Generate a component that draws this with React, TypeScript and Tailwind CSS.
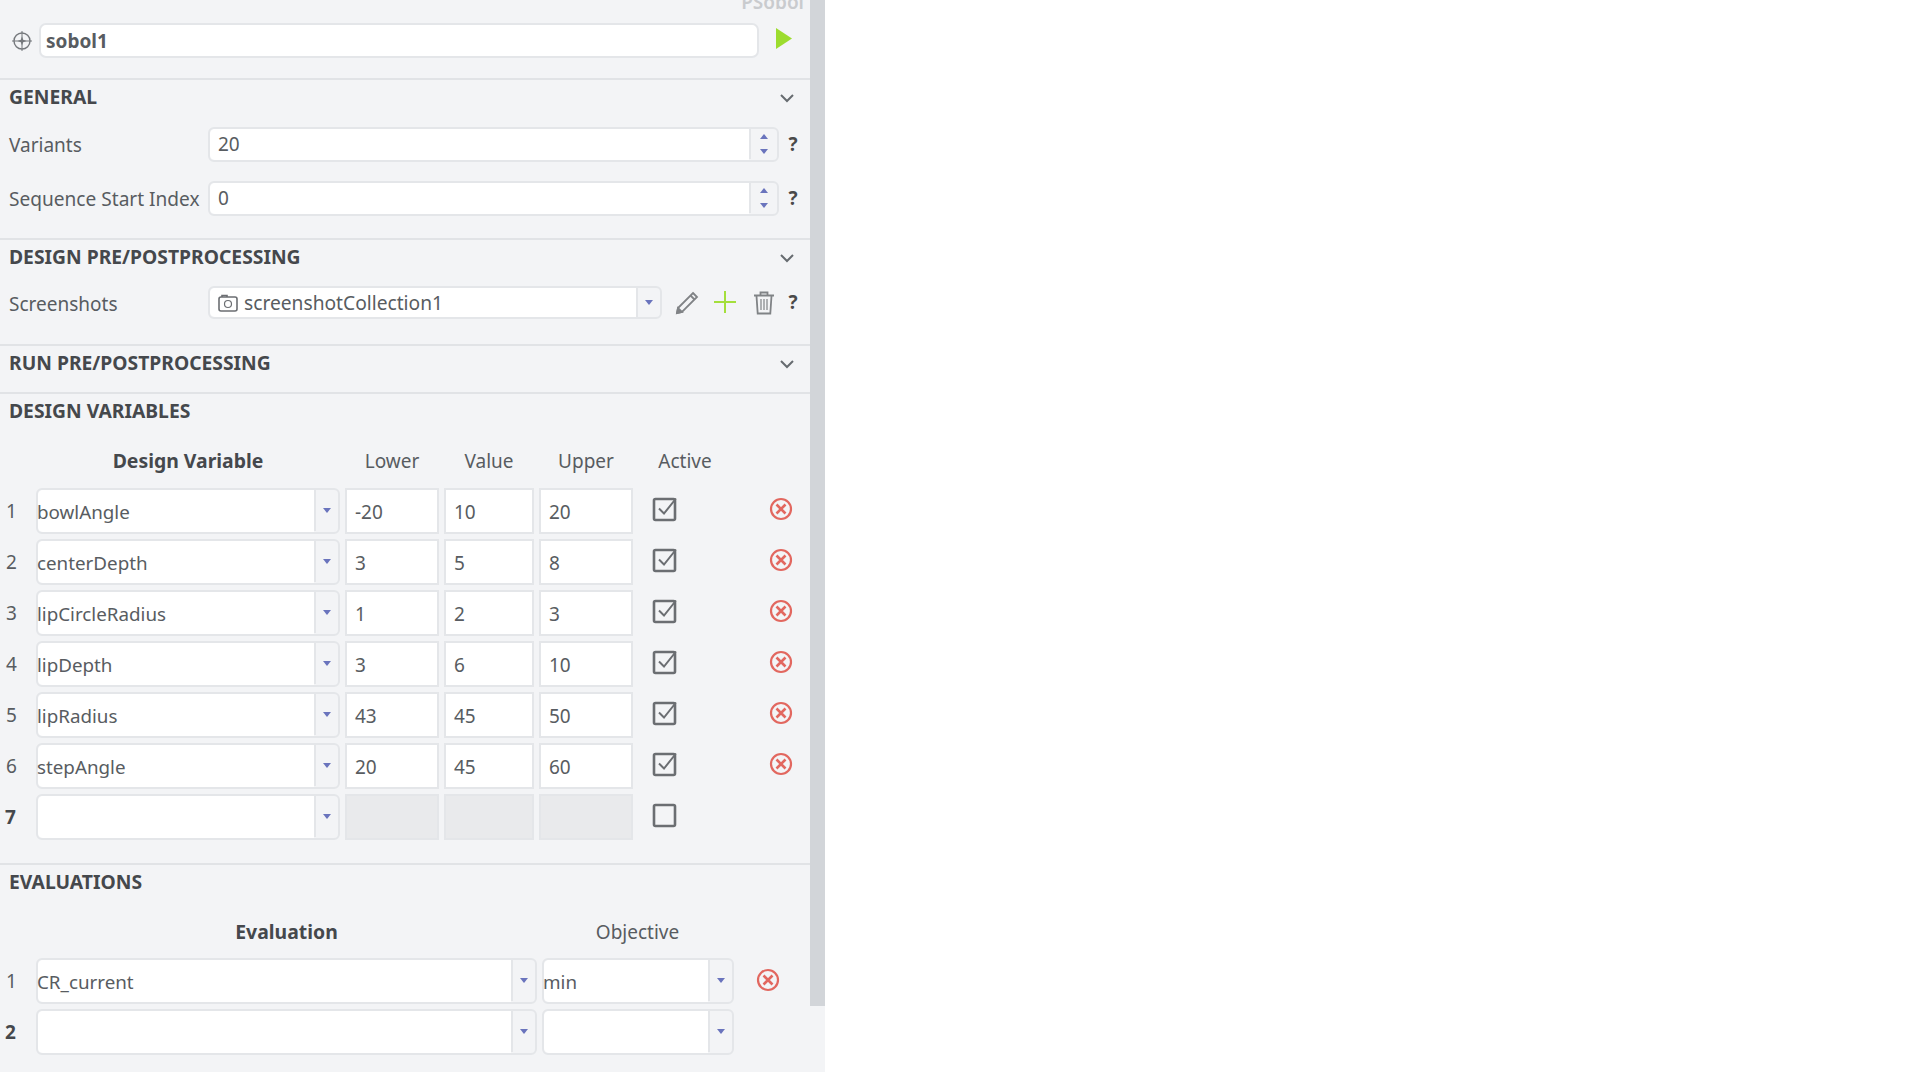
const DV = [
  { name: "bowlAngle", lower: "-20", value: "10", upper: "20" },
  { name: "centerDepth", lower: "3", value: "5", upper: "8" },
  { name: "lipCircleRadius", lower: "1", value: "2", upper: "3" },
  { name: "lipDepth", lower: "3", value: "6", upper: "10" },
  { name: "lipRadius", lower: "43", value: "45", upper: "50" },
  { name: "stepAngle", lower: "20", value: "45", upper: "60" },
];

function Caret() {
  return (
    <svg width="8" height="5" viewBox="0 0 8 5">
      <path d="M0 0h8L4 5z" fill="#6a74bd" />
    </svg>
  );
}

function Chevron() {
  return (
    <svg width="14" height="9" viewBox="0 0 14 9" fill="none" stroke="#666b70" strokeWidth="2">
      <path d="M1 1l6 6 6-6" />
    </svg>
  );
}

function Remove() {
  return (
    <svg width="24" height="24" viewBox="0 0 24 24" fill="none" stroke="#e2675f" strokeWidth="2.2">
      <circle cx="12" cy="12" r="10" />
      <path d="M7.5 7.5l9 9M16.5 7.5l-9 9" strokeWidth="2.6" />
    </svg>
  );
}

function Check({ checked }: { checked: boolean }) {
  return (
    <svg width="26" height="26" viewBox="0 0 26 26" fill="none">
      <rect x="2" y="3" width="21" height="21" rx="1.5" stroke="#6b6e72" strokeWidth="2.6" />
      {checked && <path d="M7 12.5l5 5L24 2.5" stroke="#6b6e72" strokeWidth="2" />}
    </svg>
  );
}

function Help() {
  return <span className="block w-[16px] -translate-y-[1px] text-center text-[19px] leading-[20px] font-bold text-[#4a4a4a]">?</span>;
}

function Select({ value, className, divider }: { value?: string; className: string; divider: string }) {
  return (
    <div className={`flex h-[46px] rounded-[6px] border-2 border-[#e4e6e9] ${className}`}>
      <div className="flex-1 rounded-l-[5px] bg-white pt-[9px] indent-[-1px] text-[18.8px] leading-[26px]">{value}</div>
      <div className={`flex -translate-y-[1px] items-center justify-center border-l-2 border-[#e4e6e9] ${divider}`}>
        <Caret />
      </div>
    </div>
  );
}

function NumCell({ value, className }: { value?: string; className: string }) {
  return (
    <div className={`h-[46px] border-2 border-[#e4e6e9] bg-white pl-[8px] pt-[9px] text-[19px] leading-[26px] ${className}`}>
      {value}
    </div>
  );
}

function Spinner({ value }: { value: string }) {
  return (
    <div className="flex h-[35px] w-[571px] rounded-[6px] border-2 border-[#e4e6e9]">
      <div className="flex-1 rounded-l-[5px] bg-white pl-[8px] text-[19px] leading-[31px]">{value}</div>
      <div className="flex w-[28px] -translate-y-[1px] flex-col items-center justify-center gap-[10px] border-l-2 border-[#e4e6e9]">
        <svg width="8" height="5" viewBox="0 0 8 5">
          <path d="M0 5h8L4 0z" fill="#6a74bd" />
        </svg>
        <Caret />
      </div>
    </div>
  );
}

function SectionHead({ title, collapsible }: { title: string; collapsible?: boolean }) {
  return (
    <div className="flex h-[36px] items-center justify-between pl-[9px] pr-[16px]">
      <span className="-translate-y-[1px] text-[19.3px] font-bold text-[#45484c]">{title}</span>
      {collapsible && <Chevron />}
    </div>
  );
}

export default function App() {
  return (
    <div className="h-[1072px] w-[1920px] overflow-hidden bg-white font-['Noto_Sans',sans-serif] text-[#585c61]">
      <div className="flex h-full w-[825px] items-start bg-[#f3f4f6]">
        <div className="w-[810px] shrink-0">
          <div className="h-[80px] border-b-2 border-[#e1e3e6]">
            <div className="flex h-[12px] items-end justify-end overflow-hidden pr-[6px]">
              <span className="text-[19px] font-semibold leading-[20px] text-[#c9cbce]">PSobol</span>
            </div>
            <div className="mt-[11px] flex items-center">
              <div className="flex w-[39px] justify-center pl-[4px]">
                <svg width="20" height="20" viewBox="0 0 20 20" fill="none" stroke="#75787c">
                  <circle cx="10" cy="10" r="8" strokeWidth="1.4" />
                  <path d="M10 0v20M0 10h20" strokeWidth="1" />
                  <path d="M10 5.5l1.2 3.3 3.3 1.2-3.3 1.2L10 14.5l-1.2-3.3L5.500 10l3.300-1.200z" fill="#75787c" stroke="none" />
                </svg>
              </div>
              <div className="h-[35px] w-[720px] rounded-[7px] border-2 border-[#e4e6e9] bg-white pl-[5px] text-[19px] font-bold leading-[33px]">
                sobol1
              </div>
              <svg className="-mt-[5px] ml-[17px]" width="16" height="21" viewBox="0 0 16 21">
                <path d="M0 0l16 10.500L0 21z" fill="#9cdc2e" />
              </svg>
            </div>
          </div>

          <div className="h-[160px] border-b-2 border-[#e1e3e6]">
            <SectionHead title="GENERAL" collapsible />
            <div className="mt-[11px] flex items-center">
              <span className="w-[208px] pl-[9px] pt-[1px] text-[19px]">Variants</span>
              <Spinner value="20" />
              <span className="ml-[6px]"><Help /></span>
            </div>
            <div className="mt-[19px] flex items-center">
              <span className="w-[208px] whitespace-nowrap pl-[9px] pt-[1px] text-[19.1px]">Sequence Start Index</span>
              <Spinner value="0" />
              <span className="ml-[6px]"><Help /></span>
            </div>
          </div>

          <div className="h-[106px] border-b-2 border-[#e1e3e6]">
            <SectionHead title="DESIGN PRE/POSTPROCESSING" collapsible />
            <div className="mt-[10px] flex items-center">
              <span className="w-[208px] pl-[9px] pt-[4px] text-[19px]">Screenshots</span>
              <div className="flex h-[33px] w-[454px] rounded-[6px] border-2 border-[#e4e6e9]">
                <div className="flex flex-1 items-center gap-[6px] rounded-l-[5px] bg-white pl-[8px] text-[19.2px] leading-[24px]">
                  <svg width="20" height="18" viewBox="0 0 20 18" fill="none" stroke="#6b6e72" strokeWidth="1.600">
                    <path d="M4 3V1.500h5V3" />
                    <rect x="1" y="3" width="18" height="14" rx="2" />
                    <circle cx="10" cy="10" r="3.500" strokeWidth="1.200" />
                  </svg>
                  screenshotCollection1
                </div>
                <div className="flex w-[24px] items-center justify-center border-l-2 border-[#e4e6e9]">
                  <Caret />
                </div>
              </div>
              <svg className="ml-[13px]" width="24" height="24" viewBox="0 0 24 24" fill="none" stroke="#808386" strokeWidth="1.800">
                <path d="M18 2l4 4L7 21l-5 1 1-5z" />
                <path d="M15.500 4.500l4 4" />
                <path d="M2 22l1-5 4 4z" fill="#808386" />
              </svg>
              <svg className="ml-[14px] -mt-[1px]" width="24" height="24" viewBox="0 0 24 24" stroke="#a4df3c" strokeWidth="2">
                <path d="M12 1v22M1 12h22" />
              </svg>
              <svg className="ml-[16px]" width="22" height="24" viewBox="0 0 22 24" fill="none" stroke="#808386" strokeWidth="1.800">
                <path d="M1 4.500h20M7.500 4V1.500h7V4" />
                <path d="M3.500 5l1.200 17.500h12.600L18.500 5" />
                <path d="M8 8v11M11 8v11M14 8v11" strokeWidth="1.200" />
              </svg>
              <span className="ml-[10px]"><Help /></span>
            </div>
          </div>

          <div className="h-[48px] border-b-2 border-[#e1e3e6]">
            <SectionHead title="RUN PRE/POSTPROCESSING" collapsible />
          </div>

          <div className="h-[471px] border-b-2 border-[#e1e3e6]">
            <SectionHead title="DESIGN VARIABLES" />
            <div className="mt-[16px] flex h-[30px] items-center text-[19px]">
              <span className="w-[339px] pl-[37px] text-center text-[19.4px] font-bold text-[#45484c]">Design Variable</span>
              <span className="ml-[6px] w-[94px] text-center">Lower</span>
              <span className="ml-[5px] w-[90px] text-center">Value</span>
              <span className="ml-[5px] w-[94px] text-center">Upper</span>
              <span className="ml-[13px] w-[78px] text-center">Active</span>
            </div>
            <div className="mt-[12px] flex flex-col gap-[5px]">
              {DV.map((d, i) => (
                <div key={d.name} className="flex items-center">
                  <span className="w-[36px] pl-[6px] text-[19px]">{i + 1}</span>
                  <Select value={d.name} className="w-[304px]" divider="w-[24px]" />
                  <NumCell value={d.lower} className="ml-[5px] w-[94px]" />
                  <NumCell value={d.value} className="ml-[5px] w-[90px]" />
                  <NumCell value={d.upper} className="ml-[5px] w-[94px]" />
                  <span className="ml-[19px] -mt-[4px] w-[26px]"><Check checked /></span>
                  <span className="ml-[91px] -mt-[4px]"><Remove /></span>
                </div>
              ))}
              <div className="flex items-center">
                <span className="w-[36px] pl-[5px] text-[19px] font-bold text-[#45484c]">7</span>
                <Select className="w-[304px]" divider="w-[24px]" />
                <div className="ml-[5px] h-[46px] w-[94px] border-2 border-[#e4e6e9] bg-[#e9eaec]" />
                <div className="ml-[5px] h-[46px] w-[90px] border-2 border-[#e4e6e9] bg-[#e9eaec]" />
                <div className="ml-[5px] h-[46px] w-[94px] border-2 border-[#e4e6e9] bg-[#e9eaec]" />
                <span className="ml-[19px] -mt-[4px] w-[26px]"><Check checked={false} /></span>
              </div>
            </div>
          </div>

          <div>
            <SectionHead title="EVALUATIONS" />
            <div className="mt-[16px] flex h-[30px] items-center text-[19px]">
              <span className="w-[536px] pl-[37px] text-center text-[19.4px] font-bold text-[#45484c]">Evaluation</span>
              <span className="ml-[6px] w-[191px] text-center">Objective</span>
            </div>
            <div className="mt-[11px] flex flex-col gap-[5px]">
              <div className="flex items-center">
                <span className="w-[36px] pl-[6px] text-[19px]">1</span>
                <Select value="CR_current" className="w-[501px]" divider="w-[24px]" />
                <Select value="min" className="ml-[5px] w-[192px]" divider="w-[24px]" />
                <span className="ml-[22px] -mt-[3px]"><Remove /></span>
              </div>
              <div className="flex items-center">
                <span className="w-[36px] pl-[5px] pt-[1px] text-[19px] font-bold text-[#45484c]">2</span>
                <Select className="w-[501px]" divider="w-[24px]" />
                <Select className="ml-[5px] w-[192px]" divider="w-[24px]" />
              </div>
            </div>
          </div>
        </div>
        <div className="h-[1006px] w-[15px] shrink-0 bg-[#d2d5d9]" />
      </div>
    </div>
  );
}
